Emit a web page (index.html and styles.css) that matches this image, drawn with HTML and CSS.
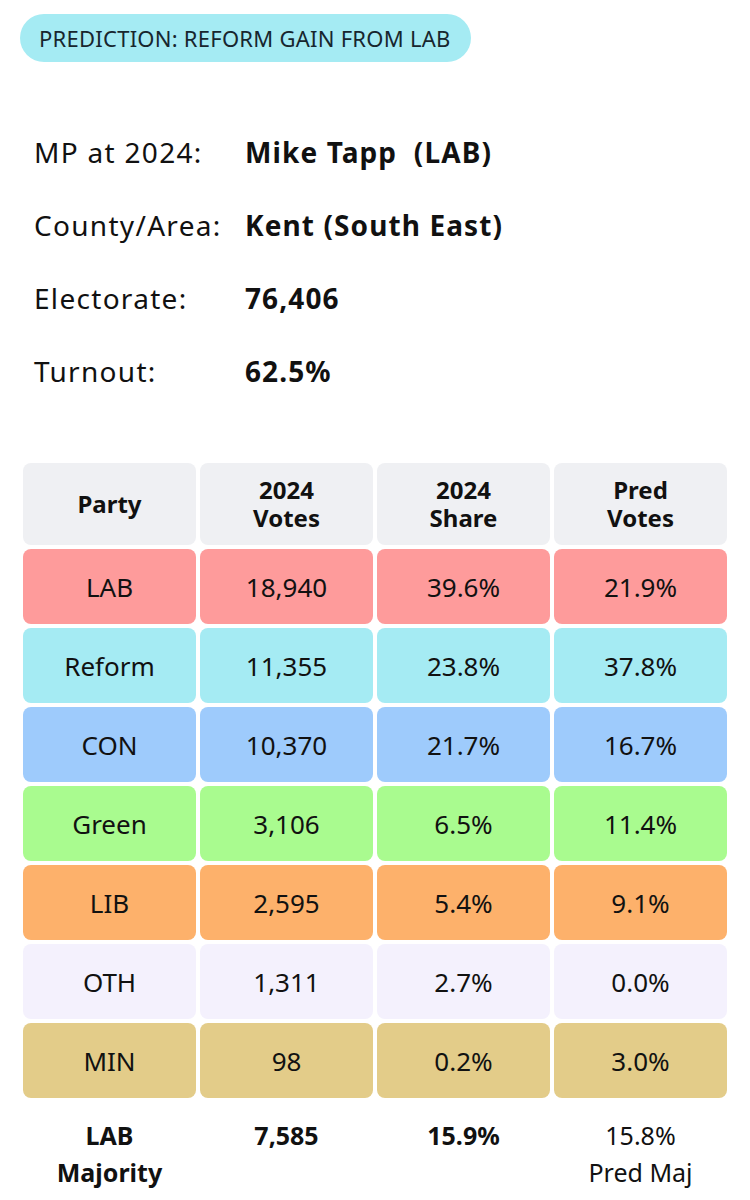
FILE: index.html
```html
<!DOCTYPE html>
<html>
<head>
<meta charset="utf-8">
<link rel="stylesheet" href="styles.css">
</head>
<body>
<div class="page">
  <div class="pill">PREDICTION: REFORM GAIN FROM LAB</div>
  <div class="info">
    <div class="label">MP at 2024:</div><div class="value">Mike Tapp&nbsp; (LAB)</div>
    <div class="label">County/Area:</div><div class="value">Kent (South East)</div>
    <div class="label">Electorate:</div><div class="value">76,406</div>
    <div class="label">Turnout:</div><div class="value">62.5%</div>
  </div>
  <div class="table">
    <div class="cell head">Party</div>
    <div class="cell head">2024<br>Votes</div>
    <div class="cell head">2024<br>Share</div>
    <div class="cell head">Pred<br>Votes</div>

    <div class="cell lab">LAB</div><div class="cell lab">18,940</div><div class="cell lab">39.6%</div><div class="cell lab">21.9%</div>
    <div class="cell ref">Reform</div><div class="cell ref">11,355</div><div class="cell ref">23.8%</div><div class="cell ref">37.8%</div>
    <div class="cell con">CON</div><div class="cell con">10,370</div><div class="cell con">21.7%</div><div class="cell con">16.7%</div>
    <div class="cell grn">Green</div><div class="cell grn">3,106</div><div class="cell grn">6.5%</div><div class="cell grn">11.4%</div>
    <div class="cell lib">LIB</div><div class="cell lib">2,595</div><div class="cell lib">5.4%</div><div class="cell lib">9.1%</div>
    <div class="cell oth">OTH</div><div class="cell oth">1,311</div><div class="cell oth">2.7%</div><div class="cell oth">0.0%</div>
    <div class="cell min">MIN</div><div class="cell min">98</div><div class="cell min">0.2%</div><div class="cell min">3.0%</div>

    <div class="foot bold">LAB<br>Majority</div>
    <div class="foot bold">7,585</div>
    <div class="foot bold">15.9%</div>
    <div class="foot">15.8%<br>Pred Maj</div>
  </div>
</div>
</body>
</html>
```
FILE: styles.css
```css
html, body {
  margin: 0;
  padding: 0;
  background: #ffffff;
}
body {
  font-family: "Noto Sans", "DejaVu Sans", sans-serif;
  color: #111111;
  width: 750px;
  height: 1200px;
  overflow: hidden;
}
.page {
  padding: 14px 0 0 0;
}
.pill {
  display: inline-block;
  margin-left: 20px;
  background: #a5ebf3;
  color: #17262e;
  border-radius: 24px;
  height: 48px;
  line-height: 48px;
  padding: 0 20px 0 19px;
  font-size: 22px;
  letter-spacing: 0.25px;
}
.info {
  display: grid;
  grid-template-columns: 211px auto;
  grid-auto-rows: 73px;
  margin: 53px 0 0 34px;
  font-size: 28px;
  letter-spacing: 1.3px;
  align-items: center;
}
.value {
  font-weight: 700;
  letter-spacing: 1.1px;
}
.table {
  display: grid;
  grid-template-columns: repeat(4, 173px);
  grid-template-rows: 82px repeat(7, 75px) auto;
  column-gap: 4px;
  row-gap: 4px;
  margin: 56px 0 0 23px;
}
.cell {
  border-radius: 8px;
  display: flex;
  align-items: center;
  justify-content: center;
  text-align: center;
  font-size: 26px;
}
.head {
  background: #eff0f3;
  font-weight: 700;
  font-size: 24px;
  line-height: 28px;
}
.lab { background: #fe9b9b; }
.ref { background: #a5ebf3; }
.con { background: #9ecbfc; }
.grn { background: #a9fb8f; }
.lib { background: #fdb16b; }
.oth { background: #f4f1fd; }
.min { background: #e3cc89; }
.foot {
  text-align: center;
  font-size: 25px;
  line-height: 37px;
  padding-top: 15px;
}
.bold {
  font-weight: 700;
}
```
